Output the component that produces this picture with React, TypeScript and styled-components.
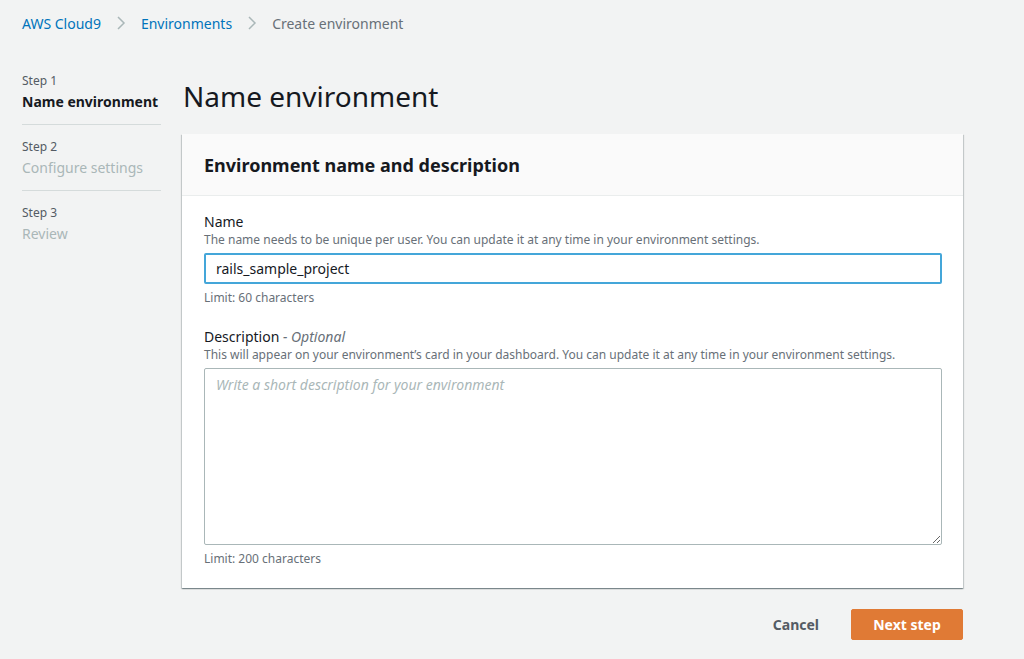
import React from 'react';
import styled, { createGlobalStyle } from 'styled-components';

const GlobalStyle = createGlobalStyle`
  html, body {
    margin: 0;
    padding: 0;
    background: #f2f3f3;
    font-family: "Noto Sans", Lato, sans-serif;
    color: #16191f;
  }
  * { box-sizing: border-box; }
`;

const Page = styled.div`
  width: 1024px;
  height: 659px;
  padding: 0 61px 0 22px;
  overflow: hidden;
`;

const Breadcrumbs = styled.nav`
  display: flex;
  align-items: center;
  height: 46px;
  font-size: 14px;
  gap: 11px;
`;

const Crumb = styled.a<{ current?: boolean }>`
  color: ${p => (p.current ? '#687078' : '#0073bb')};
  text-decoration: none;
`;

const Chevron = styled.svg`
  width: 16px;
  height: 16px;
  margin: 0 1px;
`;

const Layout = styled.div`
  display: grid;
  grid-template-columns: 139px 1fr;
  column-gap: 21px;
`;

const Steps = styled.ol`
  list-style: none;
  margin: 26px 0 0;
  padding: 0;
`;

const StepItem = styled.li<{ last?: boolean }>`
  padding: ${p => (p.last ? '13px 0 0' : '0 0 12px')};
  border-bottom: ${p => (p.last ? 'none' : '1px solid #d5dbdb')};
  & + & { padding-top: 13px; }
`;

const StepNumber = styled.div`
  font-size: 12px;
  line-height: 18px;
  color: #545b64;
`;

const StepName = styled.div<{ active?: boolean }>`
  font-size: 14px;
  line-height: 20px;
  margin-top: 2px;
  font-weight: ${p => (p.active ? 700 : 400)};
  color: ${p => (p.active ? '#16191f' : '#aab7b8')};
`;

const Main = styled.main`
  display: flex;
  flex-direction: column;
`;

const Title = styled.h1`
  margin: 32px 0 0 1px;
  font-size: 28px;
  font-weight: 400;
  line-height: 36px;
  color: #16191f;
`;

const Card = styled.section`
  margin-top: 20px;
  background: #ffffff;
  box-shadow: 0 1px 1px 0 rgba(0, 28, 36, 0.3), 1px 1px 1px 0 rgba(0, 28, 36, 0.15),
    -1px 1px 1px 0 rgba(0, 28, 36, 0.15);
`;

const CardHeader = styled.header`
  height: 62px;
  display: flex;
  align-items: center;
  padding: 0 22px;
  background: #fafafa;
  border-bottom: 1px solid #eaeded;
`;

const CardTitle = styled.h2`
  margin: 0;
  font-size: 18px;
  font-weight: 700;
  color: #16191f;
`;

const CardBody = styled.div`
  padding: 16px 21px 21px 22px;
  display: flex;
  flex-direction: column;
  gap: 21px;
`;

const Field = styled.div`
  display: flex;
  flex-direction: column;
`;

const Label = styled.label`
  font-size: 14px;
  line-height: 20px;
  color: #16191f;
`;

const Optional = styled.i`
  color: #687078;
`;

const Help = styled.div`
  font-size: 12px;
  line-height: 16px;
  color: #687078;
  margin-bottom: 5px;
`;

const Constraint = styled.div`
  font-size: 12px;
  line-height: 16px;
  color: #687078;
  margin-top: 6px;
`;

const TextInput = styled.input`
  height: 31px;
  width: 100%;
  padding: 0 10px;
  font-family: inherit;
  font-size: 14px;
  color: #16191f;
  border: 2px solid #44a6d9;
  border-radius: 2px;
  outline: none;
`;

const TextArea = styled.textarea`
  height: 177px;
  width: 100%;
  padding: 6px 11px;
  font-family: inherit;
  font-size: 14px;
  color: #16191f;
  border: 1px solid #aab7b8;
  border-radius: 2px;
  outline: none;
  resize: vertical;
  &::placeholder {
    color: #aab7b8;
    font-style: italic;
  }
`;

const Actions = styled.div`
  display: flex;
  justify-content: flex-end;
  align-items: center;
  gap: 32px;
  margin-top: 21px;
`;

const LinkButton = styled.button`
  background: none;
  border: none;
  padding: 0;
  font-family: inherit;
  font-size: 14px;
  font-weight: 700;
  color: #545b64;
  cursor: pointer;
`;

const PrimaryButton = styled.button`
  width: 112px;
  height: 31px;
  background: #e07a35;
  border: 1px solid #e07a35;
  border-radius: 2px;
  font-family: inherit;
  font-size: 14px;
  font-weight: 700;
  color: #ffffff;
  cursor: pointer;
`;

const ChevronIcon = () => (
  <Chevron viewBox="0 0 16 16" fill="none">
    <path d="M5 2l6 6-6 6" stroke="#aab7b8" strokeWidth="1.5" />
  </Chevron>
);

const steps = [
  { n: 'Step 1', name: 'Name environment', active: true },
  { n: 'Step 2', name: 'Configure settings', active: false },
  { n: 'Step 3', name: 'Review', active: false },
];

const App: React.FC = () => (
  <>
    <GlobalStyle />
    <Page>
      <Breadcrumbs>
        <Crumb href="#">AWS Cloud9</Crumb>
        <ChevronIcon />
        <Crumb href="#">Environments</Crumb>
        <ChevronIcon />
        <Crumb current>Create environment</Crumb>
      </Breadcrumbs>
      <Layout>
        <Steps>
          {steps.map((s, i) => (
            <StepItem key={s.n} last={i === steps.length - 1}>
              <StepNumber>{s.n}</StepNumber>
              <StepName active={s.active}>{s.name}</StepName>
            </StepItem>
          ))}
        </Steps>
        <Main>
          <Title>Name environment</Title>
          <Card>
            <CardHeader>
              <CardTitle>Environment name and description</CardTitle>
            </CardHeader>
            <CardBody>
              <Field>
                <Label>Name</Label>
                <Help>
                  The name needs to be unique per user. You can update it at any time in your environment settings.
                </Help>
                <TextInput defaultValue="rails_sample_project" />
                <Constraint>Limit: 60 characters</Constraint>
              </Field>
              <Field>
                <Label>
                  Description <Optional>- Optional</Optional>
                </Label>
                <Help>
                  This will appear on your environment’s card in your dashboard. You can update it at any time in your
                  environment settings.
                </Help>
                <TextArea placeholder="Write a short description for your environment" />
                <Constraint>Limit: 200 characters</Constraint>
              </Field>
            </CardBody>
          </Card>
          <Actions>
            <LinkButton>Cancel</LinkButton>
            <PrimaryButton>Next step</PrimaryButton>
          </Actions>
        </Main>
      </Layout>
    </Page>
  </>
);

export default App;
